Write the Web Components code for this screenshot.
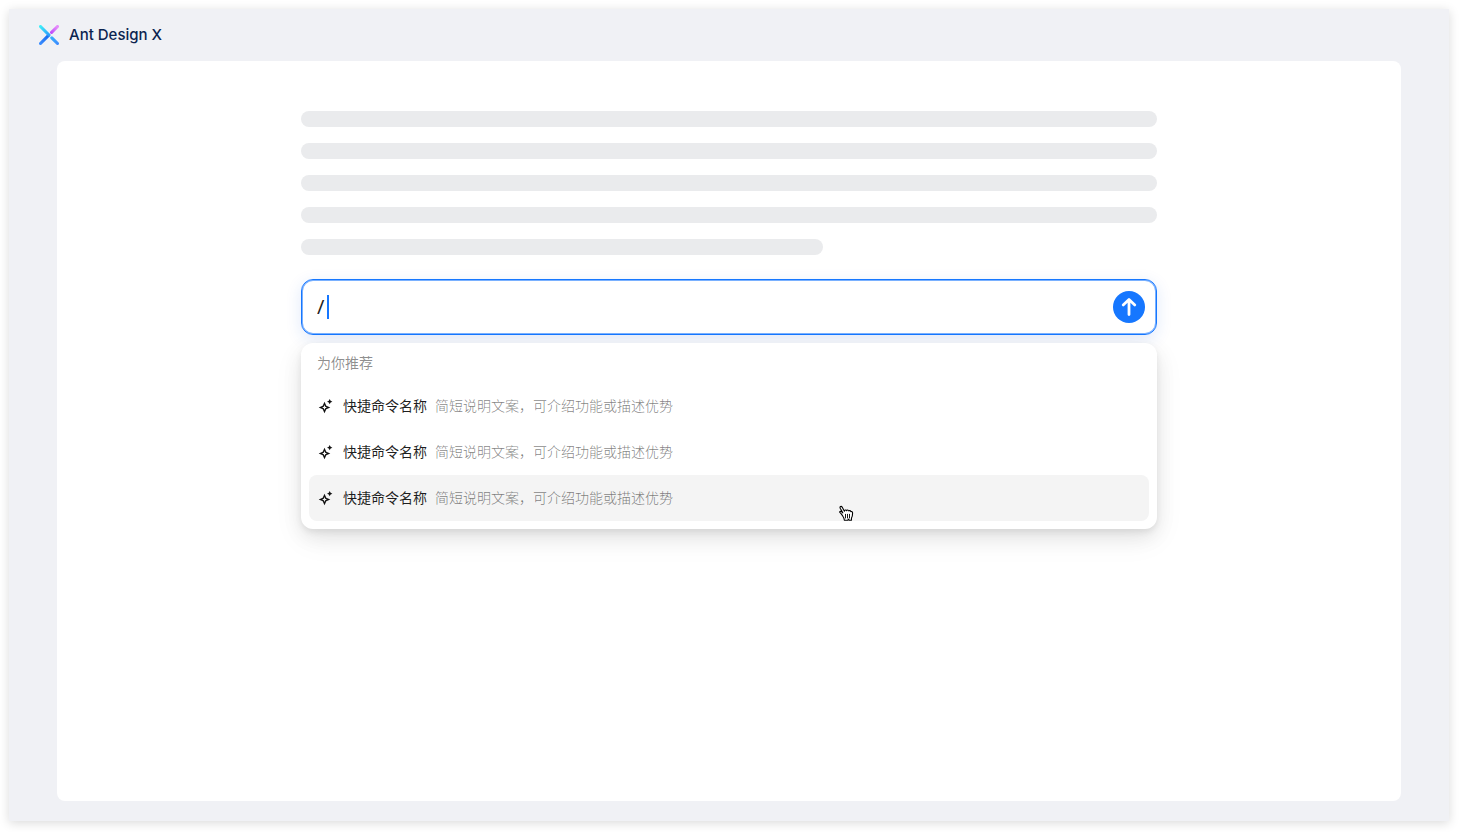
<!DOCTYPE html>
<html lang="zh-CN">
<head>
<meta charset="utf-8">
<title>Ant Design X</title>
<style>
html, body { height: 100%; margin: 0; }
body { background: #fff; box-sizing: border-box; padding: 9px 11px 11px 9px; font-family: "Inter", "Noto Sans CJK SC", sans-serif; font-size: 14px; color: rgba(0,0,0,.88); }
</style>
</head>
<body>
<x-app-frame>
  <x-brand slot="header">Ant Design X</x-brand>
  <x-skeleton></x-skeleton>
  <x-sender value="/"></x-sender>
  <x-suggestions heading="为你推荐">
    <x-suggestion description="简短说明文案，可介绍功能或描述优势">快捷命令名称</x-suggestion>
    <x-suggestion description="简短说明文案，可介绍功能或描述优势">快捷命令名称</x-suggestion>
    <x-suggestion description="简短说明文案，可介绍功能或描述优势" active>快捷命令名称</x-suggestion>
  </x-suggestions>
</x-app-frame>
<script>
class Base extends HTMLElement {
  connectedCallback() {
    if (!this.shadowRoot) this.attachShadow({ mode: 'open' }).innerHTML = this.render();
  }
}

customElements.define('x-app-frame', class extends Base {
  render() { return `
    <style>
      :host { display: flex; flex-direction: column; box-sizing: border-box; min-height: 100%; background: #f0f1f5; padding: 0 48px 20px; box-shadow: 0 2px 10px rgba(0,0,0,.15); }
      header { display: flex; align-items: center; height: 52px; margin-left: -18px; }
      main { flex: 1; background: #fff; border-radius: 8px; padding: 50px 24px; }
      .column { max-width: 856px; margin: 0 auto; }
    </style>
    <header><slot name="header"></slot></header>
    <main><div class="column"><slot></slot></div></main>`; }
});

customElements.define('x-brand', class extends Base {
  render() { return `
    <style>
      :host { display: flex; align-items: center; gap: 10px; color: #0b2450; font: 500 15px/24px "Inter", sans-serif; }
      svg { display: block; }
    </style>
    <svg width="20" height="20" viewBox="0 0 20 20" fill="none" stroke-width="3.1" stroke-linecap="round" aria-hidden="true">
      <defs>
        <linearGradient id="a" gradientUnits="userSpaceOnUse" x1="1" y1="1" x2="10" y2="10"><stop stop-color="#3ef0f8"/><stop offset="1" stop-color="#2c9dfc"/></linearGradient>
        <linearGradient id="b" gradientUnits="userSpaceOnUse" x1="18" y1="2" x2="12" y2="8"><stop stop-color="#e58bfa"/><stop offset="1" stop-color="#bd4bfb"/></linearGradient>
        <linearGradient id="c" gradientUnits="userSpaceOnUse" x1="1" y1="19" x2="10" y2="10"><stop stop-color="#3b8dff"/><stop offset="1" stop-color="#1468ee"/></linearGradient>
        <linearGradient id="d" gradientUnits="userSpaceOnUse" x1="12" y1="12" x2="19" y2="19"><stop stop-color="#35b0fd"/><stop offset="1" stop-color="#3e8cff"/></linearGradient>
      </defs>
      <path d="M1.5 18.5 9.3 10.7" stroke="url(#c)"/>
      <path d="M1.5 1.5 10 10" stroke="url(#a)"/>
      <path d="M18.5 1.5 12.6 7.4" stroke="url(#b)"/>
      <path d="M12.8 12.8 18.5 18.5" stroke="url(#d)"/>
    </svg>
    <span><slot></slot></span>`; }
});

customElements.define('x-skeleton', class extends Base {
  render() { return `
    <style>
      :host { display: flex; flex-direction: column; gap: 16px; margin-bottom: 24px; }
      div { height: 16px; border-radius: 8px; background: #eaebed; }
      div:last-of-type { width: 61%; }
    </style>
    <div></div><div></div><div></div><div></div><div></div>`; }
});

customElements.define('x-sender', class extends Base {
  render() { return `
    <style>
      :host { display: block; margin-bottom: 8px; }
      form { display: flex; align-items: center; box-sizing: border-box; height: 56px; border: 1px solid #1677ff; border-radius: 12px; padding: 0 11px 0 15px; background: #fff; box-shadow: inset 0 0 0 1px #7ab1ff, 0 4px 16px rgba(22,82,220,.13); }
      .field { position: relative; flex: 1; display: flex; }
      input { flex: 1; min-width: 0; border: 0; padding: 0; outline: 0; background: none; color: rgba(0,0,0,.88); font: 400 20px/24px "Noto Sans", sans-serif; height: 24px; }
      .caret { position: absolute; left: 10px; top: 0; width: 2px; height: 24px; background: #1677ff; }
      button { display: flex; align-items: center; justify-content: center; width: 32px; height: 32px; padding: 0; border: 0; border-radius: 50%; background: #1677ff; cursor: pointer; }
    </style>
    <form onsubmit="return false">
      <div class="field"><input type="text" aria-label="输入命令" value="${this.getAttribute('value')}"><span class="caret"></span></div>
      <button type="submit" aria-label="发送">
        <svg width="20" height="20" viewBox="0 0 20 20" fill="none" stroke="#fff" stroke-width="2.8" stroke-linecap="round" stroke-linejoin="round" aria-hidden="true"><path d="M10 17.5V2.6M4.2 7.9 10 2.4l5.8 5.500"/></svg>
      </button>
    </form>`; }
});

customElements.define('x-suggestions', class extends Base {
  render() { return `
    <style>
      :host { display: block; background: #fff; border-radius: 12px; padding: 8px; box-shadow: 0 8px 20px rgba(0,0,0,.08), 0 3px 6px rgba(0,0,0,.07), 0 10px 32px rgba(0,0,0,.06); }
      .heading { padding: 0 8px; margin-bottom: 8px; line-height: 24px; color: rgba(0,0,0,.45); }
    </style>
    <div class="heading">${this.getAttribute('heading')}</div>
    <slot></slot>`; }
});

customElements.define('x-suggestion', class extends Base {
  render() {
    const pointer = this.hasAttribute('active') ? `
    <svg class="pointer" width="16" height="18" viewBox="0 0 16 18" fill="#fff" stroke="#000" stroke-width="1.1" stroke-linejoin="round" stroke-linecap="round" aria-hidden="true">
      <path d="M4.6 10.800C3.900 9.900 3.200 8.600 2.300 7.900 1.300 7.200 1.700 6.100 2.900 6.400c.8.200 1.400.9 1.900 1.400L2.200 3.200C1.500 1.700 3.300.8 4.100 2.100l2.300 4.100c-.1-1.400 1.800-1.600 2.200-.4.1-1.100 1.900-1.100 2.200.2.400-.8 1.900-.4 2.100.7.8-.5 1.700.1 1.700 1.200 0 2-.1 3.500-1.100 5.100l-.1 2.300h-2.200l-.6-1.100-.9 1.100H6.400c-.1-1.700-.7-2.900-1.800-4.500Z"/>
      <path d="M7.500 9.300v3.700M9.500 9.300v3.700M11.500 9.300v3.700" stroke-width=".9"/>
    </svg>` : '';
    return `
    <style>
      :host { display: block; position: relative; }
      button { display: flex; align-items: center; width: 100%; height: 46px; padding: 0 8px; border: 0; border-radius: 8px; background: none; font: inherit; line-height: 24px; color: rgba(0,0,0,.88); text-align: left; cursor: pointer; }
      :host([active]) button { background: #f4f4f4; }
      .icon { width: 18px; height: 18px; margin-right: 8px; flex: none; }
      .desc { margin-left: 8px; color: rgba(0,0,0,.5); font-weight: 300; }
      .pointer { position: absolute; left: 63%; bottom: -2px; }
    </style>
    <button type="button">
      <svg class="icon" viewBox="0 0 18 18" aria-hidden="true">
        <path fill="#111" fill-rule="evenodd" d="M7.500 4.700 9.300 8.700 13.300 10.500 9.300 12.300 7.500 16.300 5.700 12.300 1.700 10.500 5.700 8.700ZM7.500 8.100 6.800 9.800 5.100 10.500 6.800 11.200 7.500 12.900 8.200 11.200 9.900 10.500 8.200 9.800Z"/>
        <path fill="#111" d="m12.700 2.100.9 1.700 1.800.9-1.800.9-.9 1.700-.9-1.700-1.800-.9 1.800-.9Z"/>
      </svg>
      <span><slot></slot></span><span class="desc">${this.getAttribute('description')}</span>
    </button>${pointer}`;
  }
});
</script>
</body>
</html>
